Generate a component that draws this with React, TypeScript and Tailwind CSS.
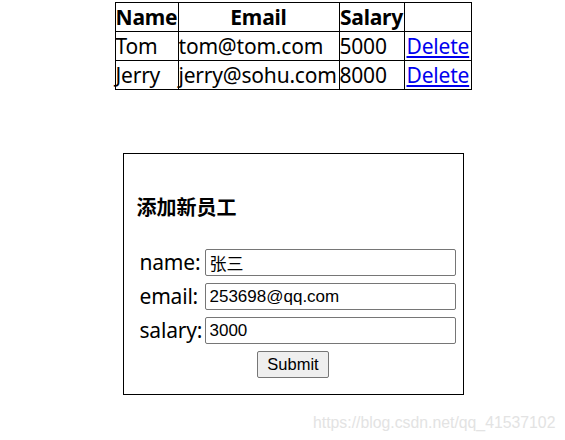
const employees = [
  { name: 'Tom', email: 'tom@tom.com', salary: 5000 },
  { name: 'Jerry', email: 'jerry@sohu.com', salary: 8000 },
];

const fields = [
  { label: 'name:', value: '张三' },
  { label: 'email:', value: '253698@qq.com' },
  { label: 'salary:', value: '3000' },
];

export default function App() {
  const ui = { fontFamily: '"Noto Sans", "Noto Sans CJK SC", sans-serif' };
  const arial = { fontFamily: '"Liberation Sans", "Noto Sans CJK SC", sans-serif' };

  return (
    <div className="relative w-[565px] h-[440px] bg-white text-black overflow-hidden" style={ui}>
      <div className="w-[586px] flex flex-col items-center pt-[2px]">
        <table className="border-collapse border border-black text-[21px] leading-[28px] tracking-[-0.2px]">
          <thead>
            <tr className="h-[29px]">
              <th className="border border-black w-[63px] px-0 font-bold">Name</th>
              <th className="border border-black w-[161px] px-0 font-bold">Email</th>
              <th className="border border-black w-[65px] px-0 font-bold">Salary</th>
              <th className="border border-black w-[67px]"></th>
            </tr>
          </thead>
          <tbody>
            {employees.map((e) => (
              <tr key={e.name} className="h-[29px]">
                <td className="border border-black px-0">{e.name}</td>
                <td className="border border-black px-0">{e.email}</td>
                <td className="border border-black px-0">{e.salary}</td>
                <td className="border border-black pl-[2px]">
                  <a href="#" className="text-[#0000ee] underline">Delete</a>
                </td>
              </tr>
            ))}
          </tbody>
        </table>

        <div className="mt-[63px] w-[341px] h-[242px] border border-black flex flex-col pl-[13px] pr-[4px] pt-[40px]">
          <h3 className="text-[20px] leading-[26px] font-bold" style={{ fontFamily: '"Noto Sans CJK SC", sans-serif' }}>添加新员工</h3>
          <div className="mt-[29px] flex flex-col gap-[7px]">
            {fields.map((f) => (
              <div key={f.label} className="flex items-center h-[27px]">
                <span className="w-[68px] shrink-0 pl-[3px] text-[21px] leading-[27px] tracking-[-0.2px]">{f.label}</span>
                <input
                  readOnly
                  value={f.value}
                  className="w-[251px] shrink-0 h-[27px] border border-[#767676] rounded-[2px] px-[4px] text-[17px] outline-none"
                  style={arial}
                />
              </div>
            ))}
          </div>
          <div className="mt-[7px] flex justify-center pr-[9px]">
            <button
              className="w-[72px] h-[27px] bg-[#efefef] border border-[#767676] rounded-[2px] text-[16.5px] leading-[25px]"
              style={arial}
            >
              Submit
            </button>
          </div>
        </div>
      </div>
      <span className="absolute left-[313px] top-[411px] text-[15.8px] text-[#e3e3e3]" style={arial}>
        https://blog.csdn.net/qq_41537102
      </span>
    </div>
  );
}
